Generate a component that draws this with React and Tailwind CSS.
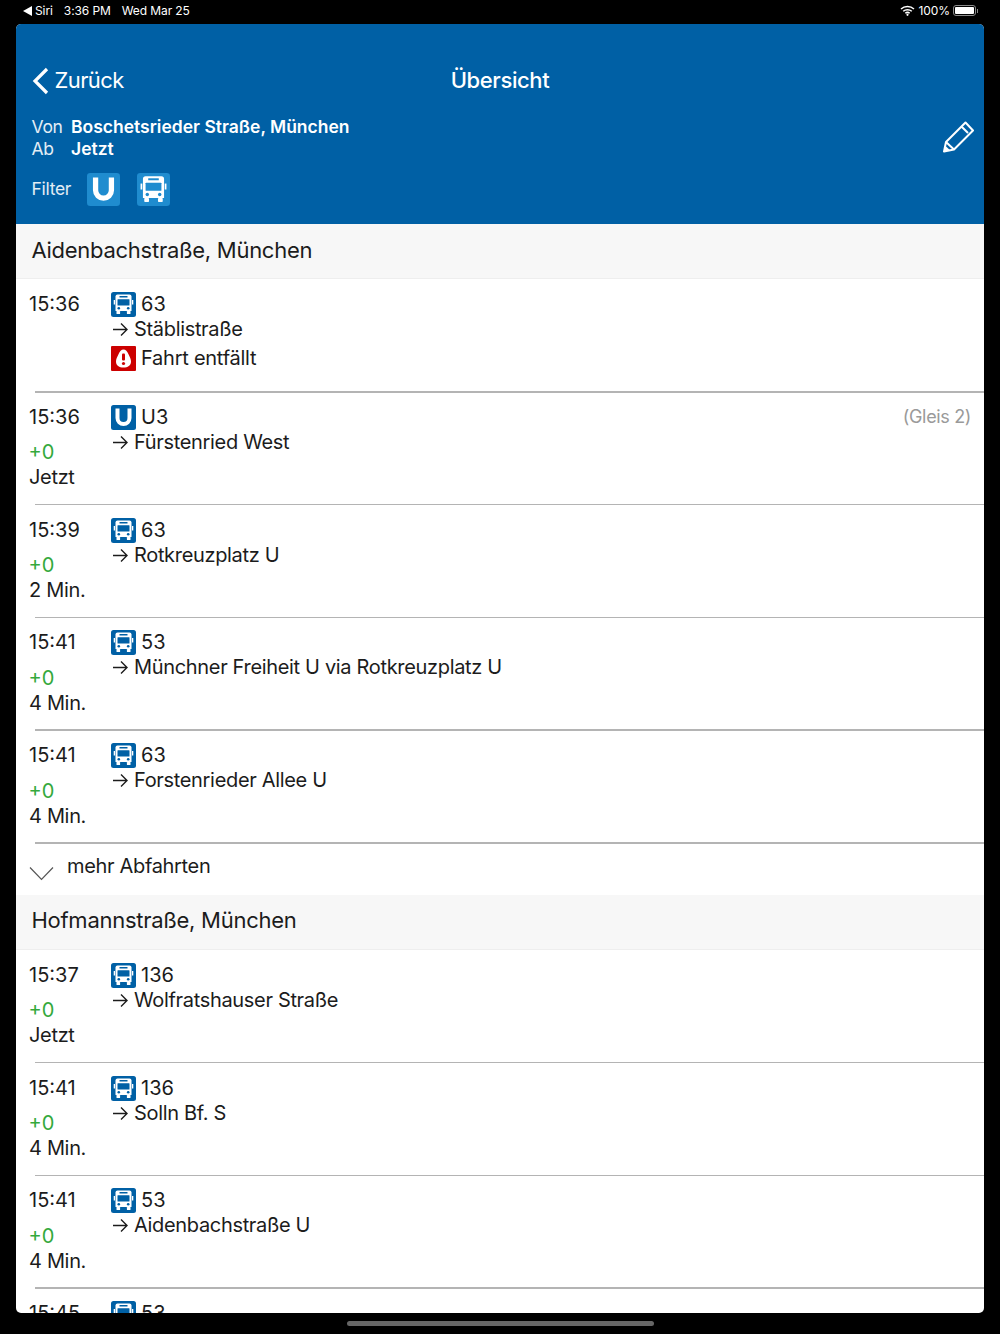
const font = { fontFamily: "Inter, 'Noto Sans', sans-serif" };

const BusIcon = ({ size = 25, bg = "#0060a5", fg = "#ffffff" }) => (
  <svg width={size} height={size} viewBox="0 0 25 25" className="shrink-0">
    <rect width="25" height="25" rx="2.5" fill={bg} />
    <path d="M6.500 2.500h12a2 2 0 0 1 2 2v14.500h-16v-14.500a2 2 0 0 1 2-2z" fill={fg} />
    <rect x="8.500" y="4" width="8" height="1.500" fill={bg} />
    <rect x="6.500" y="7.300" width="12" height="6.200" rx="0.500" fill={bg} />
    <rect x="2.700" y="8" width="1.300" height="4.500" fill={fg} />
    <rect x="21" y="8" width="1.300" height="4.500" fill={fg} />
    <circle cx="7.800" cy="16.300" r="1.300" fill={bg} />
    <circle cx="17.200" cy="16.300" r="1.300" fill={bg} />
    <rect x="5.500" y="19" width="3.600" height="3" rx="0.600" fill={fg} />
    <rect x="15.900" y="19" width="3.600" height="3" rx="0.600" fill={fg} />
  </svg>
);

const UIcon = ({ size = 25, bg = "#0060a5", fg = "#ffffff" }) => (
  <svg width={size} height={size} viewBox="0 0 25 25" className="shrink-0">
    <rect width="25" height="25" rx="2.5" fill={bg} />
    <path d="M6.500 3.500v9.500a6 6 0 0 0 12 0v-9.500" fill="none" stroke={fg} strokeWidth="4" />
  </svg>
);

const AlertIcon = () => (
  <svg width="25" height="25" viewBox="0 0 25 25" className="shrink-0">
    <rect width="25" height="25" rx="1" fill="#cc0000" />
    <path d="M12.500 3.500c2.200 0 3.700 2 5 4.700 1.300 2.600 2.500 5 2.500 7.300 0 4.200-3.300 6-7.500 6s-7.500-1.800-7.500-6c0-2.300 1.200-4.700 2.500-7.300 1.300-2.700 2.800-4.700 5-4.700z" fill="#ffffff" />
    <rect x="11" y="7.500" width="3" height="7" rx="1" fill="#cc0000" />
    <circle cx="12.500" cy="17.500" r="1.600" fill="#cc0000" />
  </svg>
);

const Row = ({ time, delay, when, type, line, dest, cancelled, track }) => (
  <div className="h-[112.75px] relative flex px-[13px] pt-[13px] shrink-0">
    <div className="w-[82px] shrink-0 text-[20px] leading-[25px] text-[#1c1c1c]">
      <div>{time}</div>
      {delay && <div className="mt-[10.5px] -ml-[0.5px] text-[#34a93c]">{delay}</div>}
      {when && <div className="tracking-[-0.33px]">{when}</div>}
    </div>
    <div className="flex-1 text-[20px] leading-[25px] text-[#1c1c1c]">
      <div className="flex items-center gap-[5px]">
        {type === "u" ? <UIcon /> : <BusIcon />}
        <span>{line}</span>
      </div>
      <div className="flex items-center">
        <svg width="23" height="25" viewBox="0 0 23 25" className="shrink-0">
          <path d="M2 12.500h14M10 6.500l6 6-6 6" fill="none" stroke="#1c1c1c" strokeWidth="1.400" />
        </svg>
        <span className="tracking-[-0.33px]">{dest}</span>
      </div>
      {cancelled && (
        <div className="flex items-center gap-[5px] mt-[4px]">
          <AlertIcon />
          <span className="tracking-[-0.25px]">Fahrt entfällt</span>
        </div>
      )}
    </div>
    {track && <div className="-mt-px text-[18px] leading-[25px] tracking-[-0.35px] text-[#9a9a9a]">{track}</div>}
    <div className="absolute left-[19px] right-0 -bottom-[0.75px] h-[1.5px] bg-[#b4b4b4]" />
  </div>
);

const SectionTitle = ({ children }) => (
  <div className="h-[55px] shrink-0 bg-[#f7f7f7] border-b border-[#eeeeee] flex items-center pl-[15.5px] pb-[2px] text-[22px] tracking-[-0.27px] text-[#1c1c1c]">
    {children}
  </div>
);

const App = () => {
  return (
    <div className="w-[1000px] h-[1334px] bg-black flex flex-col overflow-hidden" style={font}>
      {/* status bar */}
      <div className="h-[24px] shrink-0 flex items-center justify-between pl-[23px] pr-[22px] pb-[3px] text-[12px] tracking-[-0.1px] text-white">
        <div className="flex items-center">
          <svg width="9" height="10" viewBox="0 0 9 10" className="mr-[3px]"><path d="M0 5l9-5v10z" fill="#fff" /></svg>
          <span>Siri</span>
          <span className="ml-[11px]">3:36 PM</span>
          <span className="ml-[11px]">Wed Mar 25</span>
        </div>
        <div className="flex items-center">
          <svg width="15" height="11" viewBox="0 0 15 11" className="mr-[4px]">
            <path d="M1 4a9.500 9.500 0 0 1 13 0M3.200 6.300a6.400 6.400 0 0 1 8.600 0M5.300 8.300a3.400 3.400 0 0 1 4.400 0" fill="none" stroke="#fff" strokeWidth="1.500" />
            <circle cx="7.500" cy="9.800" r="1.100" fill="#fff" />
          </svg>
          <span>100%</span>
          <div className="ml-[3px] w-[23px] h-[11px] rounded-[3px] border border-[#8a8a8a] p-[1px]">
            <div className="w-full h-full bg-white rounded-[1px]" />
          </div>
          <div className="w-[1px] h-[4px] bg-[#8a8a8a] ml-[1px]" />
        </div>
      </div>

      {/* main panel */}
      <div className="flex-1 min-h-0 mx-4 rounded-[5px] overflow-hidden bg-white flex flex-col">
        <div className="h-[200px] shrink-0 bg-[#0060a5] text-white px-[15.5px] pt-[40px] relative">
          <div className="grid grid-cols-3 items-center h-[32px]">
            <div className="flex items-center text-[22px] tracking-[-0.6px]">
              <svg width="18" height="28" viewBox="0 0 18 28" className="mr-[5px]">
                <path d="M15 2L3 14l12 12" fill="none" stroke="#fff" strokeWidth="3.200" />
              </svg>
              <span>Zurück</span>
            </div>
            <div className="text-center text-[22px] tracking-[-0.4px] font-medium">Übersicht</div>
          </div>
          <div className="mt-[19.5px] text-[17.500px] leading-[22px]">
            <div className="flex">
              <span className="w-[39.5px] tracking-[-0.3px] text-[#e3edf5]">Von</span>
              <span className="font-semibold">Boschetsrieder Straße, München</span>
            </div>
            <div className="flex">
              <span className="w-[39.5px] tracking-[-0.3px] text-[#e3edf5]">Ab</span>
              <span className="font-semibold">Jetzt</span>
            </div>
          </div>
          <div className="mt-[13.5px] flex items-center text-[17.500px] tracking-[-0.3px] text-[#e3edf5]">
            <span className="w-[55.5px]">Filter</span>
            <UIcon size={33} bg="#1f8ccf" />
            <span className="w-[17px]" />
            <BusIcon size={33} bg="#1f8ccf" />
          </div>
          <svg width="32" height="32" viewBox="0 0 32 32" className="absolute right-[9px] top-[97px]">
            <path d="M1 30.500L3 21 22.500 1.500 30 9.500 11 28.500zM3 21l8 7.500M18.700 5.700l6.300 6.300" fill="none" stroke="#fff" strokeWidth="2" strokeLinejoin="round" />
            <path d="M1 30.500l1.300-5.800 4.500 4.300z" fill="#fff" />
          </svg>
        </div>

        <SectionTitle>Aidenbachstraße, München</SectionTitle>
        <Row time="15:36" line="63" dest="Stäblistraße" cancelled />
        <Row time="15:36" delay="+0" when="Jetzt" type="u" line="U3" dest="Fürstenried West" track="(Gleis 2)" />
        <Row time="15:39" delay="+0" when="2 Min." line="63" dest="Rotkreuzplatz U" />
        <Row time="15:41" delay="+0" when="4 Min." line="53" dest="Münchner Freiheit U via Rotkreuzplatz U" />
        <Row time="15:41" delay="+0" when="4 Min." line="63" dest="Forstenrieder Allee U" />
        <div className="h-[52px] shrink-0 flex pl-[13px] text-[20px] tracking-[-0.33px] text-[#1c1c1c]">
          <svg width="25" height="16" viewBox="0 0 25 16" className="mt-[23.5px] mr-[13px]">
            <path d="M1 1.500l11.500 12L24 1.500" fill="none" stroke="#555" strokeWidth="1.200" />
          </svg>
          <span className="leading-[25px] mt-[11px]">mehr Abfahrten</span>
        </div>
        <SectionTitle>Hofmannstraße, München</SectionTitle>
        <Row time="15:37" delay="+0" when="Jetzt" line="136" dest="Wolfratshauser Straße" />
        <Row time="15:41" delay="+0" when="4 Min." line="136" dest="Solln Bf. S" />
        <Row time="15:41" delay="+0" when="4 Min." line="53" dest="Aidenbachstraße U" />
        <Row time="15:45" delay="+0" when="8 Min." line="53" dest="Aidenbachstraße U" />
      </div>

      {/* home indicator */}
      <div className="h-[21px] shrink-0 flex justify-center pt-[8px]">
        <div className="w-[307px] h-[5px] rounded-full bg-[#666666]" />
      </div>
    </div>
  );
};

export default App;
